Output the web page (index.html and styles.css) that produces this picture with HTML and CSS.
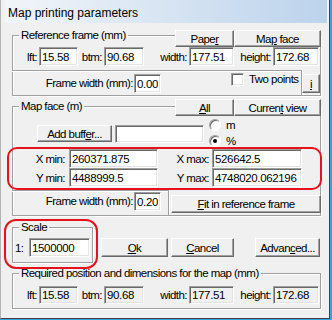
FILE: index.html
```html
<!DOCTYPE html>
<html lang="en">
<head>
  <meta charset="UTF-8">
  <title>Map printing parameters</title>
  <link rel="stylesheet" href="styles.css">
</head>
<body>

  <div class="window">
    <div class="titlebar">Map printing parameters</div>

    <div class="client">

      <div class="group ref">
        <div class="group-head">
          <span class="legend">Reference frame (mm)</span>
          <div class="head-buttons">
            <button class="btn w-left">Pape<u>r</u></button>
            <button class="btn w-right">Ma<u>p</u> face</button>
          </div>
        </div>
        <div class="row dims">
          <label class="lbl l-lft">lft:</label><input class="field f-lft" value="15.58">
          <label class="lbl l-btm">btm:</label><input class="field f-btm" value="90.68">
          <label class="lbl l-width">width:</label><input class="field f-width" value="177.51">
          <label class="lbl l-height">height:</label><input class="field f-height" value="172.68">
        </div>
        <div class="row frame-row">
          <div class="subbox sub-ref">
            <label class="lbl l-fw">Frame width (mm):</label><input class="field f-fw" value="0.00">
            <span class="check"></span><span class="check-text">Two points</span>
          </div>
          <button class="btn info"><u>i</u></button>
        </div>
      </div>

      <div class="group mapface">
        <div class="group-head">
          <span class="legend">Map face (m)</span>
          <div class="head-buttons">
            <button class="btn w-left"><u>A</u>ll</button>
            <button class="btn w-right">Curren<u>t</u> view</button>
          </div>
        </div>
        <div class="row buffer-row">
          <button class="btn buffer">Add buff<u>e</u>r...</button>
          <input class="field f-buffer" value="">
          <div class="radios">
            <div class="radio-item"><span class="radio"></span><span class="radio-text">m</span></div>
            <div class="radio-item"><span class="radio on"></span><span class="radio-text">%</span></div>
          </div>
        </div>
        <div class="row xy">
          <label class="lbl l-min">X min:</label><input class="field f-min" value="260371.875">
          <label class="lbl l-max">X max:</label><input class="field f-max" value="526642.5">
        </div>
        <div class="row xy">
          <label class="lbl l-min">Y min:</label><input class="field f-min" value="4488999.5">
          <label class="lbl l-max">Y max:</label><input class="field f-max" value="4748020.062196">
        </div>
        <div class="row frame-row2">
          <div class="subbox sub-map">
            <label class="lbl l-fw">Frame width (mm):</label><input class="field f-fw" value="0.20">
          </div>
          <button class="btn fit"><u>F</u>it in reference frame</button>
        </div>
      </div>

      <div class="row bottom-row">
        <div class="group scale">
          <div class="group-head">
            <span class="legend">Scale</span>
          </div>
          <div class="row scale-row">
            <label class="lbl l-scale">1:</label><input class="field f-scale" value="1500000">
          </div>
        </div>
        <button class="btn dlg ok"><u>O</u>k</button>
        <button class="btn dlg cancel"><u>C</u>ancel</button>
        <button class="btn dlg advanced">Advan<u>c</u>ed...</button>
      </div>

      <div class="group required">
        <div class="group-head">
          <span class="legend">Required position and dimensions for the map (mm)</span>
        </div>
        <div class="row dims req">
          <label class="lbl l-lft">lft:</label><input class="field f-lft" value="15.58" readonly>
          <label class="lbl l-btm">btm:</label><input class="field f-btm" value="90.68" readonly>
          <label class="lbl l-width">width:</label><input class="field f-width" value="177.51" readonly>
          <label class="lbl l-height">height:</label><input class="field f-height" value="172.68" readonly>
        </div>
      </div>

    </div>

    <div class="mark mark-coords"></div>
    <div class="mark mark-scale"></div>
  </div>

</body>
</html>
```

FILE: styles.css
```css
* {
  box-sizing: border-box;
}
body {
  margin: 0;
  width: 332px;
  height: 320px;
  overflow: hidden;
  background: #35a4e0;
  font-family: "Liberation Sans", Arial, sans-serif;
  font-size: 11.5px;
  color: #000;
}
.window {
  position: relative;
  width: 330px;
  height: 319px;
  background: #f0f0f0;
  border-left: 1px solid #b4b4b4;
  border-right: 1px solid #404040;
  border-bottom: 1px solid #404040;
  padding: 0 2px 0 4px;
}
.titlebar {
  height: 23px;
  padding: 6px 0 0 3px;
  font-size: 12px;
  line-height: 15px;
  background: linear-gradient(to right, #f2f5f9, #bcd3ec);
}
.client {
  padding-left: 7px;
}

/* group boxes */
.group {
  width: 309px;
  border: 1px solid #a0a0a0;
  box-shadow: inset 1px 1px 0 #fff, 1px 1px 0 #fff;
}
.group-head {
  display: flex;
  height: 17px;
  margin-top: -6px;
}
.legend {
  height: 13px;
  margin: -1px 0 0 6px;
  padding: 0 2px;
  line-height: 13px;
  background: #f0f0f0;
  letter-spacing: -0.55px;
  white-space: nowrap;
}
.head-buttons {
  display: flex;
  margin-left: auto;
  margin-right: -1px;
}
.row {
  display: flex;
  align-items: center;
}
.lbl {
  text-align: right;
  padding-right: 2px;
  letter-spacing: -0.55px;
  white-space: nowrap;
}

/* controls */
.btn {
  height: 17px;
  padding: 0;
  border: 1px solid;
  border-color: #fff #696969 #696969 #fff;
  box-shadow: inset -1px -1px 0 #a0a0a0;
  background: #f0f0f0;
  font: inherit;
  letter-spacing: -0.55px;
  color: #000;
}
.field {
  height: 19px;
  padding: 0 2px;
  border: 1px solid;
  border-color: #a0a0a0 #fff #fff #a0a0a0;
  box-shadow: inset 1px 1px 0 #696969, inset -1px -1px 0 #e3e3e3;
  background: #fff;
  font: inherit;
  letter-spacing: -0.35px;
  color: #000;
  outline: none;
}
.check {
  width: 13px;
  height: 13px;
  border: 1px solid;
  border-color: #a0a0a0 #fff #fff #a0a0a0;
  box-shadow: inset 1px 1px 0 #696969, inset -1px -1px 0 #e3e3e3;
  background: #fff;
}
.radio {
  position: relative;
  width: 12px;
  height: 12px;
  border-radius: 50%;
  border: 1px solid;
  border-color: #a0a0a0 #fff #fff #a0a0a0;
  box-shadow: inset 1px 1px 0 #696969;
  background: #fff;
}
.radio.on::after {
  content: "";
  position: absolute;
  left: 3px;
  top: 3px;
  width: 4px;
  height: 4px;
  border-radius: 50%;
  background: #000;
}
.subbox {
  display: flex;
  align-items: flex-start;
  margin-left: -1px;
  height: 25px;
  border-top: 1px solid #a0a0a0;
  border-right: 1px solid #a0a0a0;
  box-shadow: inset 0 1px 0 #fff, 1px 0 0 #fff;
}

/* reference frame */
.ref {
  margin-top: 12px;
}
.w-left {
  width: 59px;
}
.w-right {
  width: 87px;
}
.dims {
  height: 19px;
}
.l-lft { width: 26px; }
.f-lft { width: 39px; }
.l-btm { width: 26px; }
.f-btm { width: 40px; }
.l-width { width: 45px; }
.f-width { width: 45px; }
.l-height { width: 39px; }
.f-height { width: 46px; }
.frame-row {
  align-items: flex-start;
  margin-top: 4px;
}
.sub-ref {
  width: 291px;
}
.l-fw {
  width: 122px;
  padding-right: 1px;
  line-height: 19px;
}
.f-fw {
  width: 27px;
}
.sub-ref .l-fw,
.sub-ref .f-fw {
  margin-top: 3px;
}
.check {
  margin: 2px 0 0 70px;
}
.check-text {
  margin: 2px 0 0 5px;
  line-height: 13px;
  letter-spacing: -0.55px;
}
.info {
  width: 18px;
  height: 19px;
  margin-top: 4px;
}

/* map face */
.mapface {
  margin-top: 10px;
}
.mapface > .group-head {
  margin-top: -8px;
}
.mapface > .group-head .legend {
  margin-top: 1px;
}
.buffer-row {
  align-items: flex-start;
  margin-top: 3px;
}
.buffer {
  width: 75px;
  margin: 6px 0 0 24px;
}
.f-buffer {
  width: 89px;
  height: 18px;
  margin: 6px 0 0 3px;
}
.radios {
  display: flex;
  flex-direction: column;
  gap: 4px;
  margin-left: 5px;
}
.radio-item {
  display: flex;
  height: 12px;
  line-height: 12px;
}
.radio-text {
  margin-left: 5px;
}
.xy {
  height: 19px;
}
.buffer-row + .xy {
  margin-top: 2px;
}
.l-min {
  width: 56px;
  padding-right: 4px;
}
.f-min {
  width: 89px;
}
.l-max {
  width: 54px;
  padding-right: 3px;
}
.f-max {
  width: 90px;
}
.frame-row2 {
  align-items: flex-start;
  margin-top: 3px;
}
.sub-map {
  width: 157px;
}
.sub-map .l-fw,
.sub-map .f-fw {
  margin-top: 1px;
}
.fit {
  width: 150px;
  height: 18px;
  margin: 5px -1px 0 2px;
}

/* scale and dialog buttons */
.bottom-row {
  align-items: flex-start;
  margin-top: 11px;
}
.scale {
  width: 81px;
  padding-bottom: 5px;
}
.scale > .group-head,
.required > .group-head {
  height: 13px;
  margin-top: -7px;
}
.scale .legend,
.required .legend {
  margin-top: 0;
}
.scale-row {
  margin-top: 4px;
}
.l-scale {
  width: 14px;
  margin-left: 2px;
  text-align: left;
}
.f-scale {
  width: 61px;
}
.dlg {
  height: 19px;
  margin-top: 11px;
}
.ok {
  width: 67px;
  margin-left: 8px;
}
.cancel {
  width: 63px;
  margin-left: 3px;
}
.advanced {
  width: 65px;
  margin-left: 21px;
}

/* required position */
.required {
  margin-top: 10px;
  padding-bottom: 4px;
}
.req {
  height: 18px;
  margin-top: 6px;
}
.req .field {
  height: 18px;
  background: #f0f0f0;
}

/* red annotation marks */
.mark {
  position: absolute;
  border: 2px solid #e5121d;
}
.mark-coords {
  left: 6px;
  top: 147px;
  width: 315px;
  height: 43px;
  border-radius: 10px;
}
.mark-scale {
  left: 3px;
  top: 219px;
  width: 94px;
  height: 50px;
  border-radius: 12px;
}
```
